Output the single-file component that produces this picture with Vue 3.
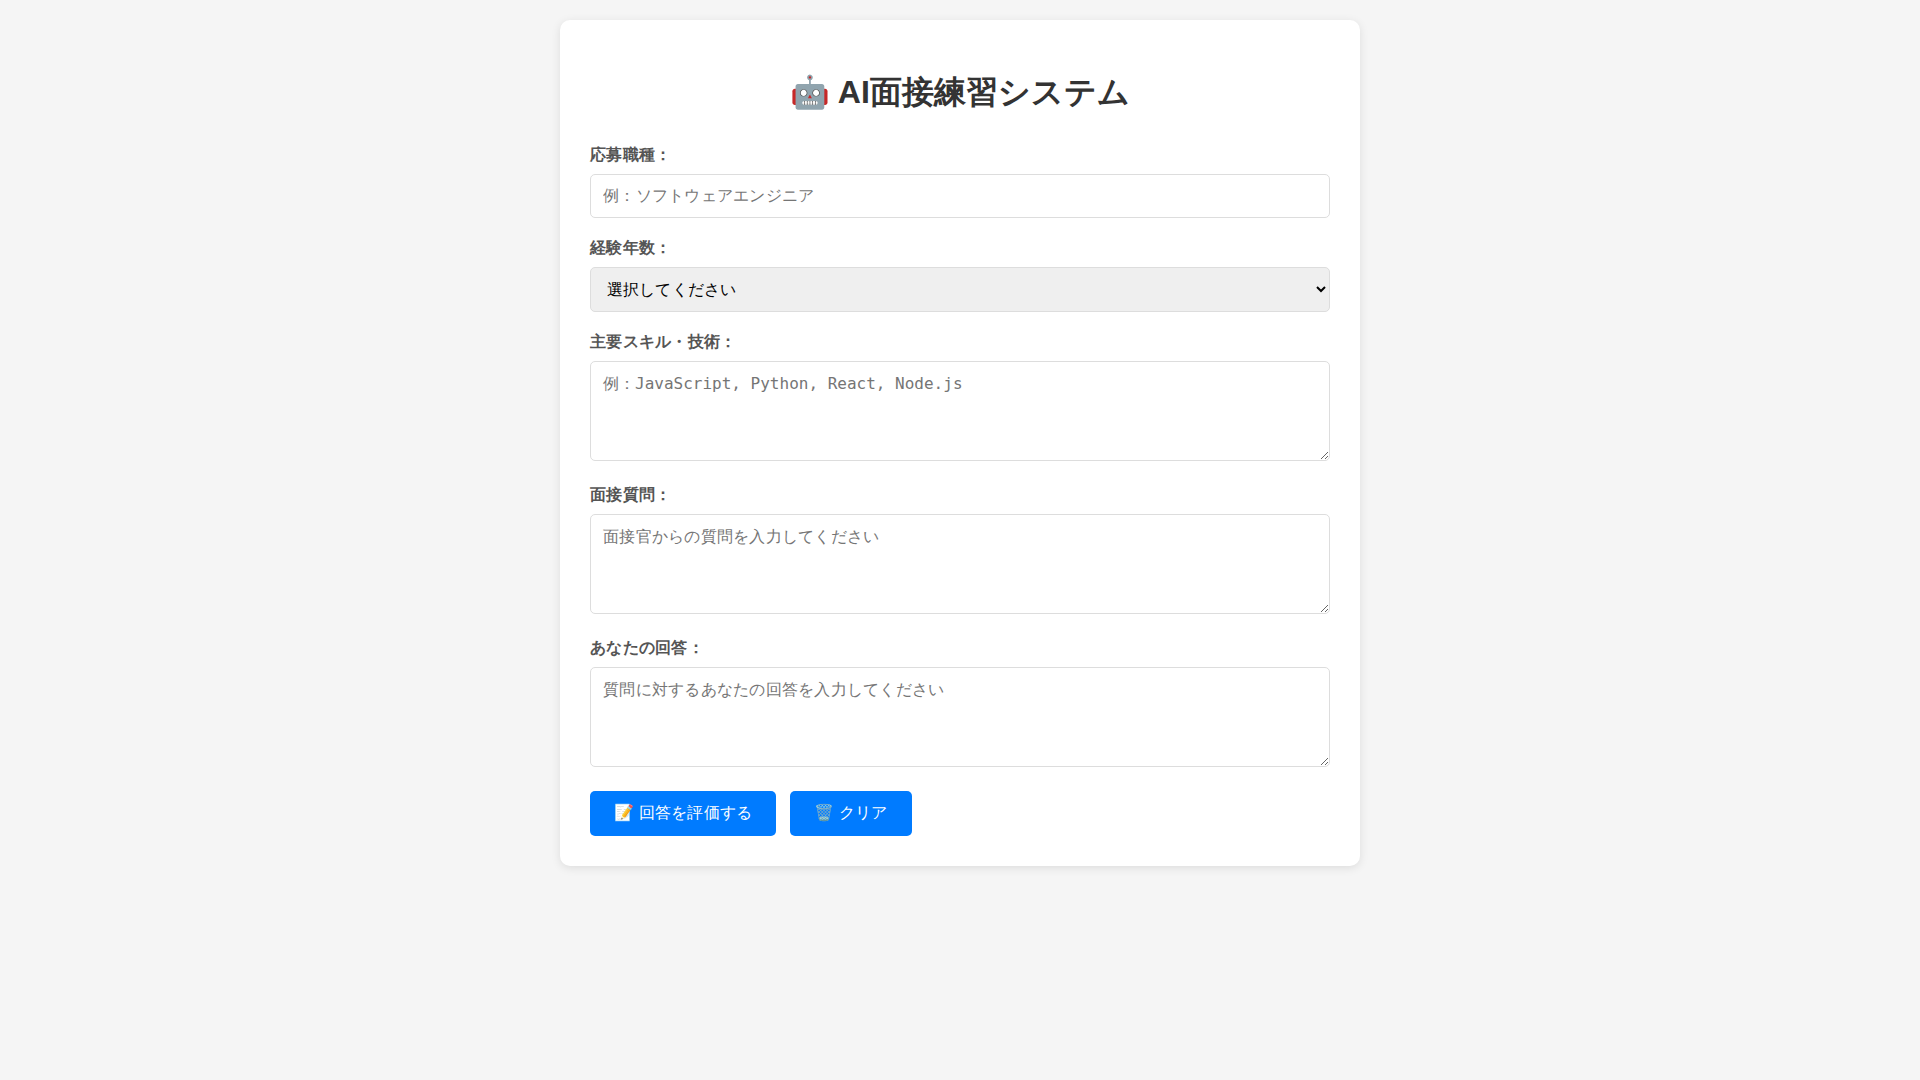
<template>
  <div class="container" lang="ja">
    <h1 class="title">🤖 AI面接練習システム</h1>
    <div class="form-group">
      <label for="position">応募職種：</label>
      <input id="position" v-model="position" class="wide-text" type="text" placeholder="例：ソフトウェアエンジニア" />
    </div>
    <div class="form-group">
      <label for="experience">経験年数：</label>
      <select id="experience" v-model="experience">
        <option value="">選択してください</option>
        <option v-for="item in experienceOptions" :key="item" :value="item">{{ item }}</option>
      </select>
    </div>
    <div class="form-group">
      <label for="skills">主要スキル・技術：</label>
      <textarea id="skills" v-model="skills" placeholder="例：JavaScript, Python, React, Node.js"></textarea>
    </div>
    <div class="form-group">
      <label for="question">面接質問：</label>
      <textarea id="question" v-model="question" class="wide-text" placeholder="面接官からの質問を入力してください"></textarea>
    </div>
    <div class="form-group">
      <label for="answer">あなたの回答：</label>
      <textarea id="answer" v-model="answer" class="wide-text" placeholder="質問に対するあなたの回答を入力してください"></textarea>
    </div>
    <div class="actions">
      <button type="button">📝 回答を評価する</button>
      <button type="button" @click="clearForm">🗑️ クリア</button>
    </div>
  </div>
</template>

<script setup>
import { ref } from 'vue'

const experienceOptions = ['1年未満', '1〜3年', '3〜5年', '5年以上']

const position = ref('')
const experience = ref('')
const skills = ref('')
const question = ref('')
const answer = ref('')

function clearForm() {
  position.value = ''
  experience.value = ''
  skills.value = ''
  question.value = ''
  answer.value = ''
}
</script>

<style>
body {
  background: #f5f5f5;
  font-family: Arial, sans-serif;
}
</style>

<style scoped>
.container {
  width: 800px;
  box-sizing: border-box;
  margin: 20px auto;
  padding: 30px;
  background: #fff;
  border-radius: 10px;
  box-shadow: 0 2px 10px rgba(0, 0, 0, 0.1);
}

.title {
  margin: 21px 0 30px;
  text-align: center;
  font-size: 32px;
  color: #333;
}

.form-group {
  margin-bottom: 20px;
}

label {
  display: block;
  margin-bottom: 8px;
  font-weight: bold;
  color: #555;
  letter-spacing: 0.25px;
}

input,
select,
textarea {
  width: 100%;
  box-sizing: border-box;
  padding: 12px;
  border: 1px solid #ddd;
  border-radius: 5px;
  font-size: 16px;
}

select {
  letter-spacing: 0.15px;
}

textarea {
  height: 100px;
  resize: vertical;
}

.wide-text {
  letter-spacing: 0.25px;
}

.actions {
  display: flex;
  gap: 14px;
}

button {
  padding: 12px 24px;
  border: none;
  border-radius: 5px;
  background: #007bff;
  color: #fff;
  font-size: 16px;
  letter-spacing: 0.2px;
  cursor: pointer;
}
</style>
